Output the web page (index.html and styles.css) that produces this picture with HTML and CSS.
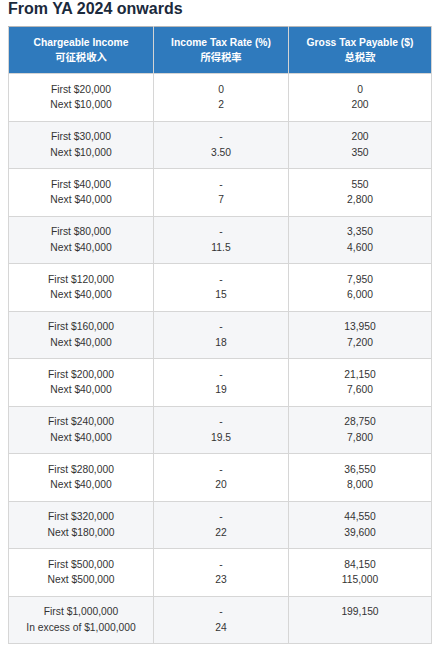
FILE: index.html
```html
<!DOCTYPE html>
<html>
<head>
<meta charset="utf-8">
<link rel="stylesheet" href="styles.css">
</head>
<body>
<h2 class="title">From YA 2024 onwards</h2>
<table class="tax">
<colgroup><col class="c1"><col class="c2"><col class="c3"></colgroup>
<thead>
<tr><th>Chargeable Income<br>可征税收入</th><th>Income Tax Rate (%)<br>所得税率</th><th>Gross Tax Payable ($)<br>总税款</th></tr>
</thead>
<tbody>
<tr><td>First $20,000<br>Next $10,000</td><td>0<br>2</td><td>0<br>200</td></tr>
<tr><td>First $30,000<br>Next $10,000</td><td>-<br>3.50</td><td>200<br>350</td></tr>
<tr><td>First $40,000<br>Next $40,000</td><td>-<br>7</td><td>550<br>2,800</td></tr>
<tr><td>First $80,000<br>Next $40,000</td><td>-<br>11.5</td><td>3,350<br>4,600</td></tr>
<tr><td>First $120,000<br>Next $40,000</td><td>-<br>15</td><td>7,950<br>6,000</td></tr>
<tr><td>First $160,000<br>Next $40,000</td><td>-<br>18</td><td>13,950<br>7,200</td></tr>
<tr><td>First $200,000<br>Next $40,000</td><td>-<br>19</td><td>21,150<br>7,600</td></tr>
<tr><td>First $240,000<br>Next $40,000</td><td>-<br>19.5</td><td>28,750<br>7,800</td></tr>
<tr><td>First $280,000<br>Next $40,000</td><td>-<br>20</td><td>36,550<br>8,000</td></tr>
<tr><td>First $320,000<br>Next $180,000</td><td>-<br>22</td><td>44,550<br>39,600</td></tr>
<tr><td>First $500,000<br>Next $500,000</td><td>-<br>23</td><td>84,150<br>115,000</td></tr>
<tr><td>First $1,000,000<br>In excess of $1,000,000</td><td>-<br>24</td><td>199,150</td></tr>
</tbody>
</table>
</body>
</html>
```
FILE: styles.css
```css
html, body {
  margin: 0;
  padding: 0;
  background: #ffffff;
}
body {
  padding: 0 5px 0 8px;
  font-family: "Liberation Sans", Arial, "Noto Sans CJK SC", sans-serif;
  color: #333333;
}
.title {
  margin: 0 0 8px 0;
  font-size: 16px;
  line-height: 18px;
  font-weight: bold;
  color: #1b2a3c;
}
.tax {
  width: 423px;
  border-collapse: collapse;
  table-layout: fixed;
  border: 1px solid #cfcfcf;
  font-size: 10.3px;
}
.c1 { width: 145px; }
.c2 { width: 135px; }
.c3 { width: 143px; }
.tax th {
  background: #2f7abd;
  color: #ffffff;
  font-weight: bold;
  font-family: "Liberation Sans", Arial, "Noto Sans CJK SC", sans-serif;
  line-height: 15px;
  padding: 8px 4px;
  height: 30px;
  border: 1px solid #d4d4d4;
  border-top-color: #b8b8b8;
  text-align: center;
  vertical-align: top;
}
.tax td {
  line-height: 15.5px;
  padding: 7.75px 4px;
  height: 31px;
  border: 1px solid #d6d6d6;
  text-align: center;
  vertical-align: top;
}
.tax tbody tr:nth-child(even) td {
  background: #f5f6f8;
}
```
